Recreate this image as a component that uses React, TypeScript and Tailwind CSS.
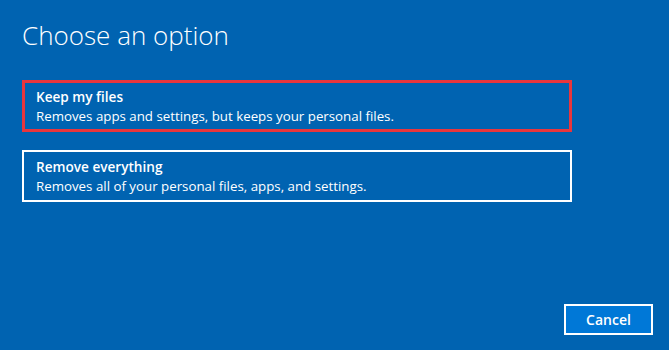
import React from "react";

const font = { fontFamily: '"Open Sans", "Noto Sans", sans-serif' };

function Option({ title, desc, selected }: { title: string; desc: string; selected?: boolean }) {
  return (
    <button
      className={`w-[550px] h-[52px] text-left flex flex-col justify-center text-white ${
        selected ? "border-[3px] border-[#e8363d] pl-[11px]" : "border-2 border-white pl-[12px]"
      }`}
    >
      <div className="text-[13.6px] font-semibold leading-[19px]">{title}</div>
      <div className="text-[13.3px] leading-[20px]">{desc}</div>
    </button>
  );
}

export default function App() {
  return (
    <div className="w-full h-[350px] bg-[#0063b1] text-white flex flex-col" style={font}>
      <div className="px-[22px] pt-[19px]">
        <h1 className="text-[26px] font-light leading-[33px]">Choose an option</h1>
        <div className="mt-[28px] flex flex-col gap-[18px]">
          <Option
            selected
            title="Keep my files"
            desc="Removes apps and settings, but keeps your personal files."
          />
          <Option
            title="Remove everything"
            desc="Removes all of your personal files, apps, and settings."
          />
        </div>
      </div>
      <div className="flex-1" />
      <div className="flex justify-end pr-[16px] pb-[15px]">
        <button className="w-[89px] h-[31px] border-2 border-white bg-[#0078d7] text-white text-[14px] font-semibold">
          Cancel
        </button>
      </div>
    </div>
  );
}
